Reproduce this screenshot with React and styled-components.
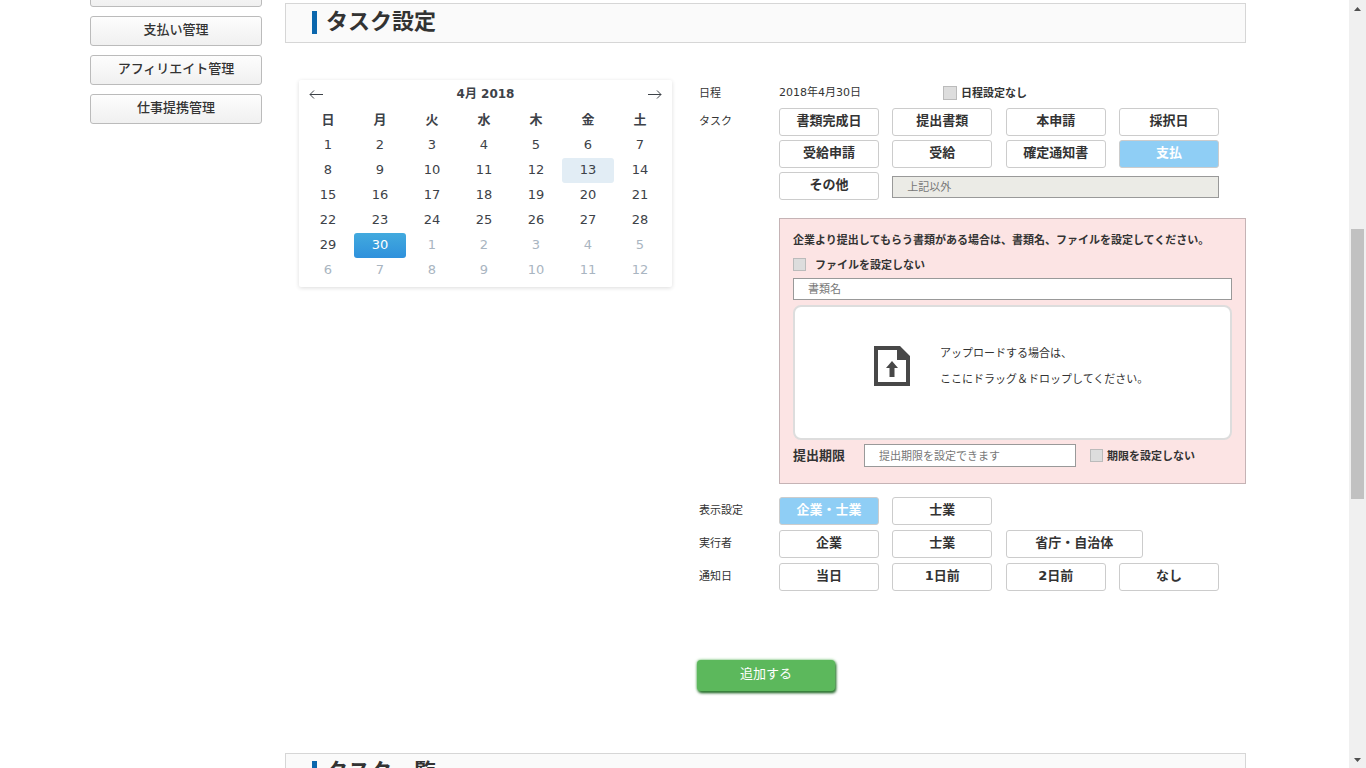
import React from "react";
import styled, { createGlobalStyle } from "styled-components";

const GlobalStyle = createGlobalStyle`
  * { box-sizing: border-box; }
  body { margin: 0; background: #fff; }
  body, button, input {
    font-family: "DejaVu Sans", "Noto Sans CJK JP", sans-serif;
    color: #333;
  }
  button { cursor: pointer; }
`;

const Window = styled.div`
  display: flex;
  height: 100vh;
  overflow: hidden;
`;

const Viewport = styled.div`
  flex: 1;
  min-width: 0;
  overflow: hidden;
`;

const Page = styled.div`
  display: grid;
  grid-template-columns: 172px minmax(0, 1fr);
  column-gap: 23px;
  max-width: 1169px;
  margin: -23px auto 0;
  padding-right: 13px;
`;

const SideMenu = styled.nav`
  display: flex;
  flex-direction: column;
  gap: 9px;
`;

const MenuButton = styled.button`
  height: 30px;
  padding: 0 0 3px;
  border: 1px solid #bbb;
  border-radius: 3px;
  background: linear-gradient(#fdfdfd, #f0f0f0);
  font-size: 13px;
  font-weight: 500;
  line-height: 24px;
`;

const Main = styled.main`
  padding-top: 26px;
`;

const SectionTitle = styled.header`
  display: flex;
  align-items: flex-start;
  gap: 9px;
  height: 40px;
  padding: 7px 26px;
  border: 1px solid #d6d6d6;
  background: #fafafa;

  &::before {
    content: "";
    width: 5px;
    height: 23px;
    background: #0b67ad;
  }
`;

const Heading = styled.h2`
  margin: 0;
  font-size: 22px;
  font-weight: 700;
  line-height: 22px;
`;

const Settings = styled.div`
  display: grid;
  grid-template-columns: 373px minmax(0, 1fr);
  column-gap: 27px;
  align-items: start;
  padding: 37px 0 62px 14px;
`;

const Calendar = styled.section`
  padding: 3px 6px 4px 3px;
  border-radius: 2px;
  box-shadow: 0 1px 4px rgba(0, 0, 0, 0.14);
  color: #3d4248;
`;

const CalendarHead = styled.div`
  display: flex;
  justify-content: space-between;
  align-items: flex-start;
  height: 25px;
  padding: 0 4px 0 7px;
`;

const MonthLabel = styled.strong`
  font-size: 12px;
  line-height: 22px;
`;

const ArrowButton = styled.button`
  display: flex;
  padding: 5px 0 0;
  border: 0;
  background: none;
`;

const DayTable = styled.table`
  width: 364px;
  table-layout: fixed;
  border-collapse: collapse;
  font-size: 13px;

  th, td { height: 25px; padding: 0; line-height: 24px; }
  th { padding-bottom: 1px; line-height: 22px; }
`;

const Day = styled.button`
  display: block;
  width: 100%;
  height: 25px;
  padding: 0 0 1px;
  border: 0;
  border-radius: 3px;
  font-size: 13px;
  line-height: 24px;
  color: ${(p) => (p.$state === "selected" ? "#fff" : p.$state === "outside" ? "#a9b5c1" : "#3d4248")};
  background: ${(p) =>
    p.$state === "selected"
      ? "linear-gradient(#42aade, #2f91dc)"
      : p.$state === "today"
      ? "#e2edf5"
      : "none"};
`;

const Form = styled.form`
  display: grid;
  grid-template-columns: 80px minmax(0, 1fr);
`;

const Label = styled.div`
  font-size: 11px;
  line-height: 28px;
`;

const DateLine = styled.div`
  display: flex;
  gap: 82px;
  height: 28px;
  font-size: 11px;
  line-height: 26px;
`;

const Choices = styled.div`
  display: grid;
  grid-template-columns: repeat(4, 100px);
  justify-content: space-between;
  row-gap: 4px;
  width: 440px;
  max-width: 100%;
  margin-bottom: ${(p) => p.$after || 5}px;
`;

const Choice = styled.button`
  width: ${(p) => (p.$wide ? 137 : 100)}px;
  height: 28px;
  padding: 0 0 2px;
  border: 1px solid #ccc;
  border-radius: 3px;
  font-size: 13px;
  font-weight: 700;
  line-height: 24px;
  white-space: nowrap;
  color: ${(p) => (p.$active ? "#fff" : "#333")};
  background: ${(p) => (p.$active ? "#8fcef5" : "#fff")};
`;

const TextInput = styled.input`
  width: ${(p) => (p.$width ? p.$width : "100%")};
  height: ${(p) => (p.$tall ? 23 : 22)}px;
  padding: 1px 14px 0;
  border: 1px solid #999;
  border-radius: 0;
  background: #fff;
  font-size: 11px;

  &::placeholder { color: #777; opacity: 1; }
  &:disabled { background: #ebebe6; }
`;

const OtherInput = styled(TextInput)`
  grid-column: 2 / -1;
  align-self: end;
  margin-bottom: 2px;
`;

const CheckLabel = styled.label`
  display: flex;
  align-items: center;
  gap: ${(p) => p.$gap || 4}px;
  height: 24px;
  font-size: 11px;
  font-weight: 700;
  line-height: 24px;
`;

const CheckText = styled.span`
  padding-top: 2px;
`;

const CheckBox = styled.input`
  appearance: none;
  flex: none;
  width: ${(p) => p.$size || 13}px;
  height: ${(p) => p.$size || 13}px;
  margin: 0;
  border: 1px solid #bbb;
  background: #ddd;
`;

const DateCheck = styled(CheckLabel)`
  height: 26px;
`;

const FilePanel = styled.section`
  margin-bottom: 13px;
  padding: 9px 13px 16px;
  border: 1px solid #c5b3b5;
  background: #fce4e4;
`;

const Notice = styled.p`
  margin: 0;
  font-size: 11px;
  font-weight: 700;
  line-height: 26px;
`;

const PanelCheck = styled(CheckLabel)`
  height: 21px;
  margin-bottom: 3px;
`;

const DropZone = styled.div`
  display: flex;
  gap: 30px;
  height: 135px;
  margin: 5px 0 4px;
  padding: 34px 79px;
  border: 2px solid #ddd;
  border-radius: 8px;
  background: #fff;

  svg { flex: none; margin-top: 5px; }
`;

const DropText = styled.p`
  margin: 0;
  font-size: 11px;
  line-height: 26px;
`;

const Deadline = styled.div`
  display: flex;
  align-items: center;
  height: 23px;
  gap: 14px;
`;

const DeadlineLabel = styled.label`
  width: 57px;
  font-size: 13px;
  font-weight: 700;
  line-height: 22px;
`;

const AddButton = styled.button`
  justify-self: start;
  grid-column: 1 / -1;
  width: 138px;
  height: 31px;
  margin: 64px 0 0 -2px;
  padding: 0 0 3px;
  border: 0;
  border-radius: 4px;
  background: #5cb85c;
  box-shadow: 0 0 3px #5cb85c, 1px 2px 3px #064d0c;
  color: #fff;
  font-size: 13px;
  line-height: 24px;
`;

const ScrollTrack = styled.div`
  display: flex;
  flex-direction: column;
  align-items: center;
  width: 17px;
  padding: 7px 0 6px;
  background: #f0f0f0;
`;

const ScrollThumb = styled.div`
  width: 13px;
  height: 270px;
  margin: 218px 0 auto;
  background: #c1c1c1;
`;

const WEEKDAYS = ["日", "月", "火", "水", "木", "金", "土"];
const WEEKS = Array.from({ length: 6 }, (_, w) =>
  Array.from({ length: 7 }, (_, d) => {
    const n = w * 7 + d + 1;
    if (n > 30) return { day: n - 30, state: "outside" };
    return { day: n, state: n === 30 ? "selected" : n === 13 ? "today" : "normal" };
  })
);

const TASKS = ["書類完成日", "提出書類", "本申請", "採択日", "受給申請", "受給", "確定通知書", "支払", "その他"];

const Arrow = ({ flip }) => (
  <svg width="14" height="12" viewBox="0 0 14 12" fill="none" stroke="#3d4248" aria-hidden="true">
    <path d={flip ? "M0 6.5H13M9 2.5L13 6.5L9 10.5" : "M14 6.5H1M5 2.5L1 6.5L5 10.5"} />
  </svg>
);

const UploadIcon = () => (
  <svg width="36" height="40" viewBox="0 0 36 40" aria-hidden="true">
    <path fill="#484848" fillRule="evenodd" d="M0 0H26L36 10V40H0ZM4 4V36H32V14H23V4Z" />
    <path fill="#484848" d="M18 15L24 22H20.500V31H15.500V22H12Z" />
  </svg>
);

const Triangle = ({ down }) => (
  <svg width="7" height="4" viewBox="0 0 7 4" aria-hidden="true">
    <path fill="#505050" d={down ? "M0 0H7L3.500 4Z" : "M0 4H7L3.500 0Z"} />
  </svg>
);

const ChoiceRow = ({ items, active }) => (
  <Choices>
    {items.map((t) => (
      <Choice key={t} type="button" $active={t === active} $wide={t.length > 5}>
        {t}
      </Choice>
    ))}
  </Choices>
);

export default function App() {
  return (
    <Window>
      <GlobalStyle />
      <Viewport>
        <Page>
          <SideMenu>
            <MenuButton type="button" />
            <MenuButton type="button">支払い管理</MenuButton>
            <MenuButton type="button">アフィリエイト管理</MenuButton>
            <MenuButton type="button">仕事提携管理</MenuButton>
          </SideMenu>
          <Main>
            <SectionTitle>
              <Heading>タスク設定</Heading>
            </SectionTitle>
            <Settings>
              <Calendar>
                <CalendarHead>
                  <ArrowButton type="button"><Arrow /></ArrowButton>
                  <MonthLabel>4月 2018</MonthLabel>
                  <ArrowButton type="button"><Arrow flip /></ArrowButton>
                </CalendarHead>
                <DayTable>
                  <thead>
                    <tr>{WEEKDAYS.map((d) => <th key={d} scope="col">{d}</th>)}</tr>
                  </thead>
                  <tbody>
                    {WEEKS.map((week, i) => (
                      <tr key={i}>
                        {week.map(({ day, state }) => (
                          <td key={day}><Day type="button" $state={state}>{day}</Day></td>
                        ))}
                      </tr>
                    ))}
                  </tbody>
                </DayTable>
              </Calendar>
              <Form>
                <Label>日程</Label>
                <DateLine>
                  <span>2018年4月30日</span>
                  <DateCheck>
                    <CheckBox type="checkbox" $size={14} />
                    <CheckText>日程設定なし</CheckText>
                  </DateCheck>
                </DateLine>
                <Label>タスク</Label>
                <Choices $after={18}>
                  {TASKS.map((t) => (
                    <Choice key={t} type="button" $active={t === "支払"}>{t}</Choice>
                  ))}
                  <OtherInput type="text" placeholder="上記以外" aria-label="上記以外" disabled />
                </Choices>
                <div />
                <FilePanel>
                  <Notice>企業より提出してもらう書類がある場合は、書類名、ファイルを設定してください。</Notice>
                  <PanelCheck $gap={9}>
                    <CheckBox type="checkbox" />
                    <CheckText>ファイルを設定しない</CheckText>
                  </PanelCheck>
                  <TextInput type="text" placeholder="書類名" aria-label="書類名" />
                  <DropZone>
                    <UploadIcon />
                    <DropText>
                      アップロードする場合は、
                      <br />
                      ここにドラッグ＆ドロップしてください。
                    </DropText>
                  </DropZone>
                  <Deadline>
                    <DeadlineLabel htmlFor="deadline">提出期限</DeadlineLabel>
                    <TextInput id="deadline" type="text" placeholder="提出期限を設定できます" $width="212px" $tall />
                    <CheckLabel>
                      <CheckBox type="checkbox" />
                      <CheckText>期限を設定しない</CheckText>
                    </CheckLabel>
                  </Deadline>
                </FilePanel>
                <Label>表示設定</Label>
                <ChoiceRow items={["企業・士業", "士業"]} active="企業・士業" />
                <Label>実行者</Label>
                <ChoiceRow items={["企業", "士業", "省庁・自治体"]} />
                <Label>通知日</Label>
                <ChoiceRow items={["当日", "1日前", "2日前", "なし"]} />
                <AddButton type="button">追加する</AddButton>
              </Form>
            </Settings>
            <SectionTitle>
              <Heading>タスク一覧</Heading>
            </SectionTitle>
          </Main>
        </Page>
      </Viewport>
      <ScrollTrack>
        <Triangle />
        <ScrollThumb />
        <Triangle down />
      </ScrollTrack>
    </Window>
  );
}
